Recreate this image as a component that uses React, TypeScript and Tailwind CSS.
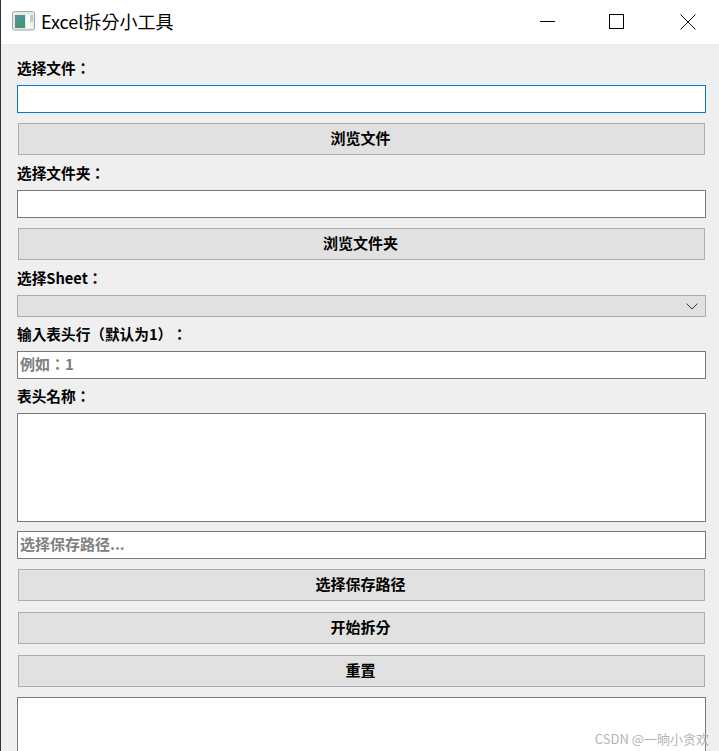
const cjk = "font-['Noto_Sans_CJK_TC','Liberation_Sans',sans-serif] [text-spacing-trim:space-all]"

function Label({ text, className = 'h-[34px]' }: { text: string; className?: string }) {
  return <div className={`${className} flex items-center text-[14.67px] font-bold leading-none text-black`}>{text}</div>
}

function Field({ placeholder, focused }: { placeholder?: string; focused?: boolean }) {
  return (
    <input
      readOnly
      placeholder={placeholder}
      className={`block h-[28px] w-[689px] border bg-white px-[2px] pb-[3px] text-[15px] font-bold outline-none placeholder:text-[#808080] ${focused ? 'border-[#0078d7]' : 'border-[#7a7a7a]'}`}
    />
  )
}

function Button({ text, className = '' }: { text: string; className?: string }) {
  return (
    <button className={`ml-px block h-[32px] w-[687px] border border-[#adadad] bg-[#e1e1e1] pb-[3px] pr-[2px] text-[15px] font-bold leading-none text-black ${className}`}>
      {text}
    </button>
  )
}

export default function App() {
  return (
    <div className={`relative h-[751px] w-[719px] overflow-hidden border-l border-[#2a3640] bg-[#efefef] ${cjk}`}>
      {/* title bar */}
      <div className="flex h-[44px] items-center bg-white pl-[11px]">
        <svg width="24" height="20" viewBox="0 0 24 20" className="mb-[2px]">
          <defs>
            <linearGradient id="pane" x1="0" y1="0" x2="0.6" y2="1">
              <stop offset="0" stopColor="#5b8fa8" />
              <stop offset="1" stopColor="#3f9a6c" />
            </linearGradient>
          </defs>
          <rect x="0.5" y="0.5" width="22" height="18.5" rx="2" fill="#e6e8ea" stroke="#a2a6aa" />
          <rect x="3" y="4" width="10" height="13" fill="url(#pane)" />
          <rect x="14" y="4" width="4" height="13" fill="#fbfbfb" />
          <rect x="18" y="4" width="3" height="7" fill="#c4cac8" />
          <rect x="18" y="11" width="3" height="6" fill="#f0f2f1" />
        </svg>
        <span className="mb-[2px] ml-[5px] text-[18px] leading-none text-black">Excel拆分小工具</span>
        <div className="mb-px ml-auto flex items-center">
          <div className="h-px w-[15px] bg-black" />
          <div className="ml-[54px] h-[15px] w-[15px] border border-black" />
          <svg width="16" height="16" viewBox="0 0 16 16" className="ml-[56px] mr-[23px]">
            <path d="M0.5 0.5 L15.5 15.5 M15.5 0.5 L0.5 15.5" stroke="#111" strokeWidth="1" />
          </svg>
        </div>
      </div>

      {/* form */}
      <div className="flex flex-col pl-[16px]">
        <Label text="选择文件：" className="h-[41px] pt-[7px]" />
        <Field focused />
        <Button text="浏览文件" className="mt-[10px]" />
        <Label text="选择文件夹：" className="h-[35px] pt-px" />
        <Field />
        <Button text="浏览文件夹" className="mt-[10px]" />
        <Label text="选择Sheet：" className="h-[35px] pt-px" />
        <div className="flex h-[22px] w-[689px] items-center justify-end border border-[#adadad] bg-[#e1e1e1] pr-[7px]">
          <svg width="12" height="7" viewBox="0 0 12 7">
            <path d="M0.5 0.5 L6 6 L11.5 0.5" fill="none" stroke="#333" strokeWidth="1" />
          </svg>
        </div>
        <Label text="输入表头行（默认为1）：" />
        <Field placeholder="例如：1" />
        <Label text="表头名称：" />
        <textarea readOnly className="block h-[109px] w-[689px] resize-none border border-[#7a7a7a] bg-white outline-none" />
        <div className="mt-[9px]">
          <Field placeholder="选择保存路径..." />
        </div>
        <Button text="选择保存路径" className="mt-[10px]" />
        <Button text="开始拆分" className="mt-[11px]" />
        <Button text="重置" className="mt-[11px]" />
        <textarea readOnly className="mt-[10px] block h-[109px] w-[689px] shrink-0 resize-none border border-[#7a7a7a] bg-white outline-none" />
      </div>

      {/* watermark */}
      <div className="absolute bottom-[6px] right-[10px] text-[13px] leading-none text-[#b4b4b4]">CSDN @一晌小贪欢</div>
    </div>
  )
}
